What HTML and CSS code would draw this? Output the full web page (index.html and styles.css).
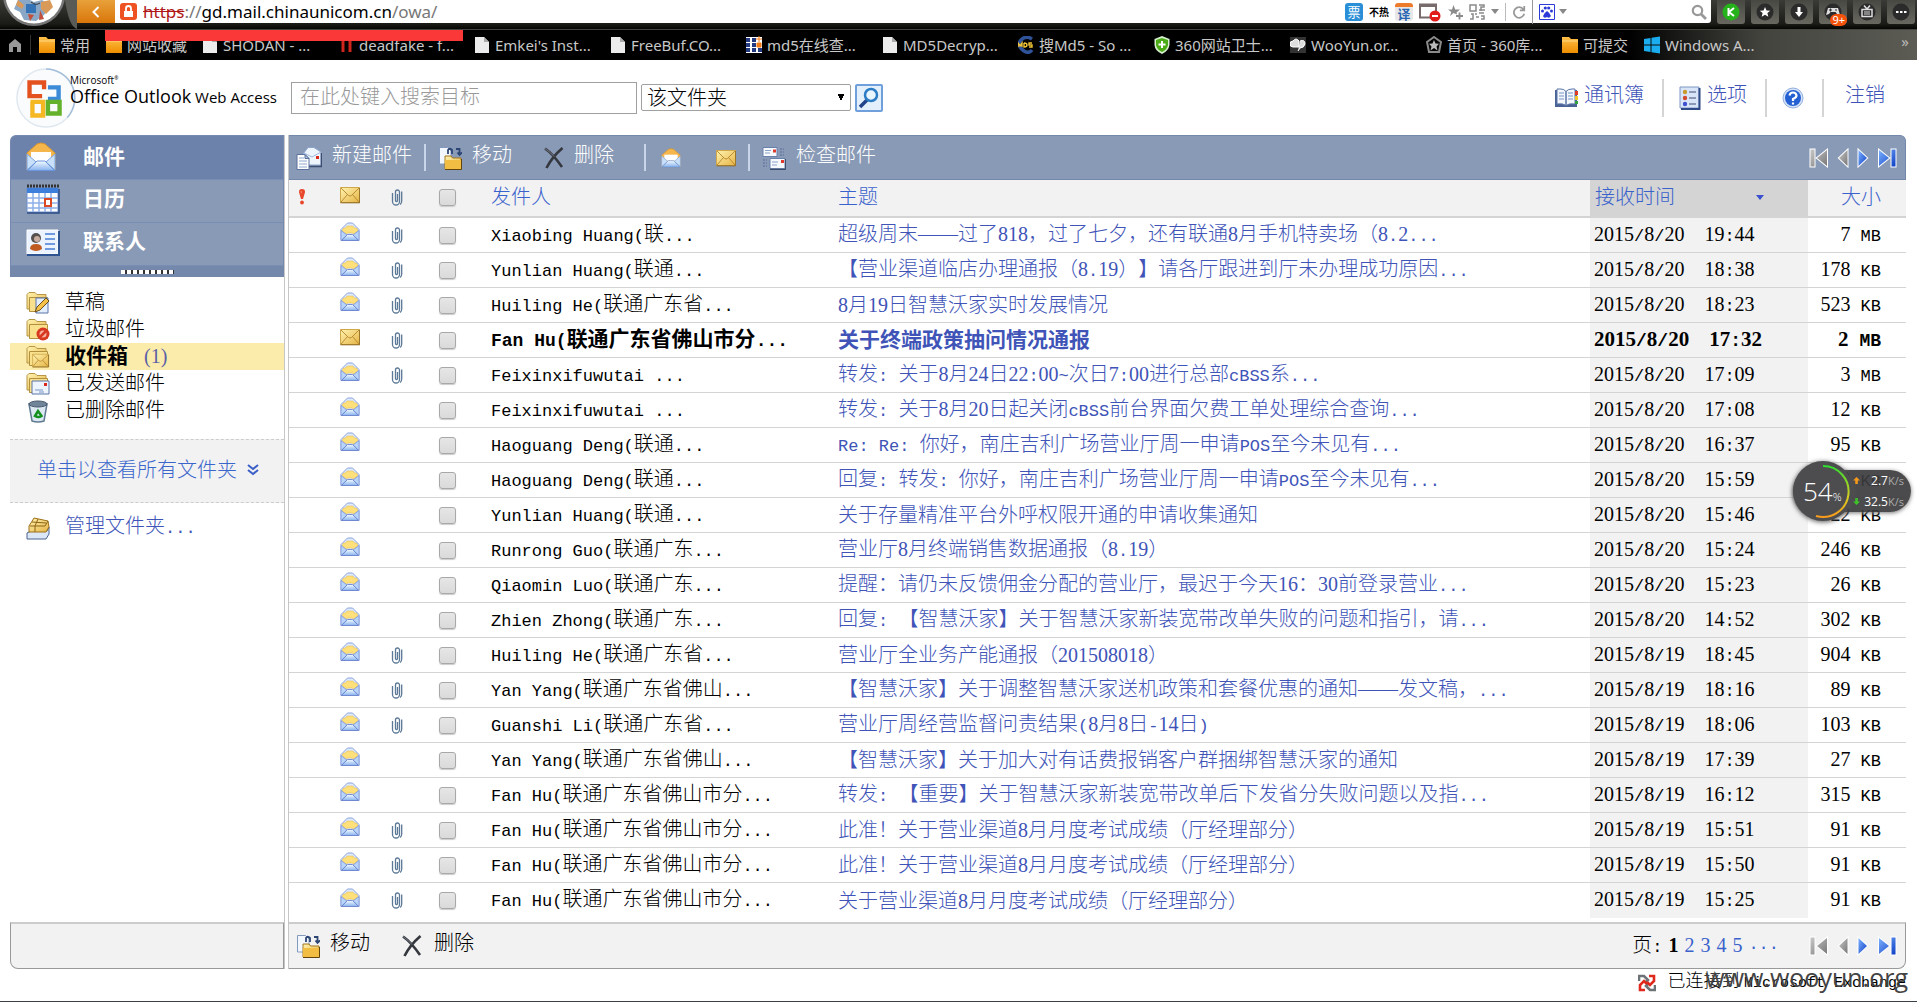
FILE: index.html
```
<!DOCTYPE html>
<html lang="zh-CN">
<head>
    <meta charset="UTF-8">
    <meta name="viewport" content="width=device-width, initial-scale=1.0">
    <title>Outlook Web Access</title>
    <link rel="stylesheet" href="styles.css">
</head>
<body>
    <!-- Shared icons -->
    <svg class="defs" aria-hidden="true">
        <defs>
            <linearGradient id="gold" x1="0" y1="0" x2="1" y2="1"><stop offset="0" stop-color="#fff3b0"/><stop offset="1" stop-color="#e6b445"/></linearGradient>
            <linearGradient id="sky" x1="0" y1="0" x2="0" y2="1"><stop offset="0" stop-color="#f4fbff"/><stop offset="1" stop-color="#86b2ee"/></linearGradient>
            <linearGradient id="orange" x1="0" y1="0" x2="0" y2="1"><stop offset="0" stop-color="#ffc04a"/><stop offset="1" stop-color="#ee8e00"/></linearGradient>
            <linearGradient id="navBlue" x1="0" y1="0" x2="1" y2="1"><stop offset="0" stop-color="#7db2ff"/><stop offset="1" stop-color="#0d3fc4"/></linearGradient>
            <linearGradient id="navGray" x1="0" y1="0" x2="1" y2="1"><stop offset="0" stop-color="#c8c8c8"/><stop offset="1" stop-color="#777"/></linearGradient>
            <symbol id="open" viewBox="0 0 20 20">
                <path d="M1 7.500 5.500 3 7.500 1h5l2 2L19 7.500v11H1z" fill="#dcebfd" stroke="#8ba2dc"/>
                <path d="M3.500 6h2l1.500-2h6l1.500 2h2l1.500 2.500-4 3.500-2-1H8l-2 1-4-3.500z" fill="#ffe07a" stroke="#e3b548" stroke-width=".5"/>
                <path d="M1 8.500 7 13 1 18.500zM19 8.500 13 13l6 5.500z" fill="#b9d4fa" stroke="#7d97d8" stroke-width=".8"/>
                <path d="M1.500 18.500 7.500 12.500h5l6 6z" fill="url(#sky)" stroke="#6d86cf" stroke-width=".9"/>
            </symbol>
            <symbol id="openLarge" viewBox="0 0 30 30">
                <path d="M1 11 11 2q4-2 8 0l10 9v17H1z" fill="#f5b64b" stroke="#d99634"/>
                <path d="M5 10h20v9H5z" fill="#fff"/>
                <path d="M1 12 10 20 1 28zM29 12l-9 8 9 8z" fill="#c9e0fb" stroke="#7ba4e4"/>
                <path d="m1.500 28.500 9.500-9.500h8l9.500 9.500z" fill="url(#sky)" stroke="#6b95dc"/>
            </symbol>
            <symbol id="closed" viewBox="0 0 20 18">
                <path d="M.5 1.500h19v15H.5z" fill="url(#gold)" stroke="#d0a849"/>
                <path d="m1 2 7.500 7.500q1.500 1 3 0L19 2M1 16l6.500-7.500M19 16l-6.500-7.500" fill="none" stroke="#b4832a" stroke-width=".9"/>
                <path d="M.5 16.800h19.200V2" fill="none" stroke="#8e6a24"/>
            </symbol>
            <symbol id="clip" viewBox="0 0 12 17">
                <path d="M1.500 4v8.500a3.300 3.300 0 0 0 7 0V3a2 2 0 0 0-4 0v8.500a.9.900 0 0 0 2 0V5M10.700 2.500v9.500q0 2-1.500 3.500" fill="none" stroke="#5b7896" stroke-width="1.300"/>
            </symbol>
            <symbol id="bang" viewBox="0 0 8 18">
                <path d="M4 1a3 3 0 0 1 3 3.200L5 11H3L1 4.200A3 3 0 0 1 4 1z" fill="#e8472c"/><circle cx="4" cy="14.500" r="1.900" fill="#e8472c"/><path d="M2.500 3.500 3.500 3v3z" fill="#ffb09a"/>
            </symbol>
            <symbol id="newmail" viewBox="0 0 26 24">
                <path d="M7 8 12 1.500h6L25 6v13H10z" fill="#eef4fc" stroke="#8ea6ce"/><path d="m8 7 8 4 9-5" fill="none" stroke="#9db4da"/><path d="M20 10h3v3h-3z" fill="#d8281c"/><path d="M10 20.500h15.500V7" fill="none" stroke="#3c4d70" stroke-width="1.500"/>
                <path d="M1 8.500h8l4 4v11H1z" fill="#fff" stroke="#5b719c"/><path d="M3 12h5M3 15h8M3 18h8M3 21h8" stroke="#8fa6cc"/><path d="M9 8.500v4h4z" fill="#a9c0e6" stroke="#5b719c"/>
            </symbol>
            <symbol id="move" viewBox="0 0 24 24">
                <path d="M1.500 1.500h8L13 5v13H1.500z" fill="#f2f7fd" stroke="#8298bd"/><path d="M10 8V4q1.500-2.500 4 0v4M18 3h3.500v5m-2-1.500L21.500 9 24 6.500" fill="none" stroke="#2c4575" stroke-width="1.800"/>
                <path d="M7 12.500V10h6l1.500 2H23v11H7z" fill="url(#gold)" stroke="#a1741b"/><path d="M7 14h16v9H7z" fill="#f1bd43"/><path d="M7 23.500h16.500V13" fill="none" stroke="#63440d"/>
            </symbol>
            <symbol id="del" viewBox="0 0 20 22">
                <path d="M1 1.500q8 5.500 17 18.500M18.500 1Q8 10 2.500 21" fill="none" stroke="#34373e" stroke-width="2.600"/><path d="M1 1.500q6 4 9 8" fill="none" stroke="#777c87"/>
            </symbol>
            <symbol id="check" viewBox="0 0 24 24">
                <path d="M1 1.500h14v9H1z" fill="#f6f9fd" stroke="#6880ab"/><path d="M3 4.500h6M3 7h5" stroke="#8aa1c8"/><path d="M11 3.500h3v3h-3z" fill="#e0382a"/><path d="M18 3h4M18 6h4M18 9h4M1 14h4M1 17h4M1 20h4" stroke="#566c96" stroke-dasharray="2 1"/>
                <path d="M8 12.500h15v10H8z" fill="#f6f9fd" stroke="#6880ab"/><path d="M10 16h6M10 19h5" stroke="#8aa1c8"/><path d="M19 14h3v3h-3z" fill="#e0382a"/><path d="M8 23.400h15.700V13" fill="none" stroke="#33415e"/>
            </symbol>
            <symbol id="folder" viewBox="0 0 24 24">
                <path d="M1 18V3.500L3 1.500h6l2 2h9V18z" fill="url(#gold)" stroke="#b79645"/><path d="M3.500 20.500V6.500h18v14z" fill="#f8e08d" stroke="#b3903d"/>
            </symbol>
            <symbol id="first" viewBox="0 0 20 20"><path d="M1.500 1.500h4v17h-4zM18 2v16L8 10z"/></symbol>
            <symbol id="prev" viewBox="0 0 12 20"><path d="M10.500 2v16L2 10z"/></symbol>
            <symbol id="next" viewBox="0 0 12 20"><path d="M1.500 2v16l8.500-8z"/></symbol>
            <symbol id="last" viewBox="0 0 20 20"><path d="M14.500 1.500h4v17h-4zM2 2v16l10-8z"/></symbol>
            <symbol id="bmFolder" viewBox="0 0 16 18"><path d="M0 1h7l2 2h7v14H0z" fill="url(#orange)"/><path d="M0 5h16" stroke="#ffd884"/></symbol>
            <symbol id="bmFile" viewBox="0 0 16 18"><path d="M1 1h9l5 5v11H1z" fill="#ececec"/><path d="M10 1v5h5z" fill="#aaa"/></symbol>
        </defs>
    </svg>

    <header class="browser">
        <div class="address-row">
            <svg class="avatar" viewBox="0 0 77 29"><path d="M0 0h77v29q-8-2-12-29z" fill="#5a5a56"/><circle cx="34" cy="-5" r="31" fill="#777"/><circle cx="34" cy="-5" r="28.500" fill="#fff"/><path d="M18 0q8-3 16 2l8-2 8 5-6 10-8 6-12-1-4-8-6-3z" fill="#8ba7c6"/><path d="M26 4h10v9H26z" fill="#3474b6"/><path d="m18 0 6 5-2 4-6-4zm23 2 9-2 3 7-7 7-5-5z" fill="#d99a59"/><path d="m28 14 6 1-4 6zM40 10l4 9-5 1z" fill="#c24f3a"/><path d="M31 2q5 4 9 1" stroke="#333" fill="none"/></svg>
            <button class="back" aria-label="后退"><svg viewBox="0 0 12 16" width="10" height="14"><path d="m9 2-6 6 6 6" fill="none" stroke="#fff" stroke-width="2.400"/></svg></button>
            <div class="address">
                <svg class="lock" viewBox="0 0 17 17"><rect width="17" height="17" rx="3" fill="#ee5222"/><path d="M4 8h9v6H4z" fill="#fff"/><path d="M6 8V5.500a2.500 2.500 0 0 1 5 0V8" fill="none" stroke="#fff" stroke-width="1.800"/></svg>
                <div class="url"><s>https</s>://<b>gd.mail.chinaunicom.cn</b>/owa/</div>
                <span class="tag tag-blue">票</span>
                <span class="tag tag-plain">不热</span>
                <span class="tag tag-orange">译</span>
                <svg viewBox="0 0 22 20" width="22" height="20"><path d="M1 2.500h16v13H1z" fill="#fff" stroke="#776b6b" stroke-width="2"/><path d="M1 3.500h16" stroke="#776b6b" stroke-width="3"/><circle cx="16" cy="14" r="5.500" fill="#e21b1b"/><path d="M13 14h6" stroke="#fff" stroke-width="2"/></svg>
                <svg viewBox="0 0 16 16" width="16" height="16"><path d="m6.500 1 1.700 4.500H13L9.500 8.500l.5 2L6.500 9 3 12l1.300-4L1 5.500h4z" fill="#8b8b8b"/><path d="M9 12h7M12.500 8.500v7" fill="none" stroke="#8b8b8b" stroke-width="1.800"/></svg>
                <svg viewBox="0 0 16 16" width="16" height="16"><path d="M1 1h6v6H1zM10 1h5v2h-3v4M10 6h6M2 10h2v5H1M6 10h2M10 9h5M7 13h3M12 12h3v3h-3" fill="none" stroke="#8b8b8b" stroke-width="1.500"/></svg>
                <span class="caret"></span>
                <span class="split"></span>
                <svg viewBox="0 0 16 16" width="14" height="14"><path d="M13 5a6 6 0 1 0 1 5M14 1v5H9" fill="none" stroke="#999" stroke-width="2"/></svg>
                <div class="engine">
                    <svg viewBox="0 0 16 16" width="16" height="16"><path d="M.5.500h15v15H.5z" fill="#fff" stroke="#2c3bd8"/><path d="M8 7q3 2 4 5-2 3-4 1-3 2-4-1 1-3 4-5z" fill="#2c3bd8"/><circle cx="3.500" cy="7" r="1.500" fill="#2c3bd8"/><circle cx="6.300" cy="4" r="1.600" fill="#2c3bd8"/><circle cx="9.700" cy="4" r="1.600" fill="#2c3bd8"/><circle cx="12.500" cy="7" r="1.500" fill="#2c3bd8"/></svg>
                    <span class="caret"></span>
                </div>
                <svg class="lens" viewBox="0 0 16 16" width="16" height="16"><circle cx="6.500" cy="6.500" r="4.700" fill="none" stroke="#999" stroke-width="2.200"/><path d="m10 10 5 5" stroke="#999" stroke-width="2.800"/></svg>
            </div>
            <div class="extensions">
                <button aria-label="K"><svg viewBox="0 0 18 18"><circle cx="9" cy="9" r="8.500" fill="#25b21a"/><path d="M6.500 5v8M12 5 7 9l5 4" fill="none" stroke="#fff" stroke-width="2"/></svg></button>
                <button aria-label="收藏"><svg viewBox="0 0 18 18"><circle cx="9" cy="9" r="8.500" fill="#2b2b2b"/><path d="m9 4 1.500 3.400 3.700.3-2.800 2.400.9 3.600L9 11.800l-3.300 1.900.9-3.600-2.800-2.400 3.700-.3z" fill="#fff"/></svg></button>
                <button aria-label="下载"><svg viewBox="0 0 18 18"><circle cx="9" cy="9" r="8.500" fill="#2b2b2b"/><path d="M7.500 4h3v5H13l-4 5-4-5h2.500z" fill="#fff"/></svg></button>
                <button aria-label="游戏"><svg viewBox="0 0 18 18"><circle cx="9" cy="9" r="8.500" fill="#2b2b2b"/><path d="M4 5h10l2 7-3-1-1.500-2h-5L5 11l-3 1z" fill="#ddd"/><path d="M5 7h3M6.500 5.500v3M11 7h2" stroke="#333"/></svg><span class="badge">9+</span></button>
                <button aria-label="视频"><svg viewBox="0 0 18 18"><circle cx="9" cy="9" r="8.500" fill="#2b2b2b"/><path d="M4 6.500h10v7H4zM6 2.500l3 3.500 3-3.500" fill="none" stroke="#ddd" stroke-width="1.500"/><path d="M6 9h6M6 11h6" stroke="#ddd"/></svg></button>
                <button aria-label="更多"><svg viewBox="0 0 18 18"><circle cx="9" cy="9" r="8.500" fill="#2b2b2b"/><path d="M4 8h2.500v2H4zM8 8h2.500v2H8zM12 8h2.500v2H12z" fill="#fff"/></svg></button>
            </div>
        </div>
        <nav class="bookmarks">
            <a class="home" href="#" aria-label="主页"><svg viewBox="0 0 14 14"><path d="M1 14V6l6-5 6 5v8H9V9H5v5z" fill="#999"/></svg></a>
            <a class="short" href="#"><svg><use href="#bmFolder"/></svg>常用</a>
            <a class="medium" href="#"><svg><use href="#bmFolder"/></svg>网站收藏</a>
            <a href="#"><svg><use href="#bmFile"/></svg>SHODAN - ...</a>
            <a href="#"><svg viewBox="0 0 16 18"><path d="M5 1v15M12 1v15" stroke="#d0251c" stroke-width="3"/></svg>deadfake - f...</a>
            <a href="#"><svg><use href="#bmFile"/></svg>Emkei's Inst...</a>
            <a href="#"><svg><use href="#bmFile"/></svg>FreeBuf.CO...</a>
            <a href="#"><svg viewBox="0 0 16 18"><path d="M0 1h16v16H0z" fill="#fff"/><path d="M0 2h4v4H0zM6 2h4v4H6zM0 7h4v4H0zM6 7h4v4H6zM0 12h4v4H0zM6 12h4v4H6zM12 12h4v4h-4z" fill="#243a80"/><path d="M11 7h4v4h-4zM13 0v6M10 3h6" fill="#f57c14" stroke="#f57c14"/></svg>md5在线查...</a>
            <a href="#"><svg><use href="#bmFile"/></svg>MD5Decryp...</a>
            <a href="#"><svg viewBox="0 0 16 18"><path d="M14 3Q8-1 3 4T6 15q5 3 8-1" fill="none" stroke="#2f5299" stroke-width="3.500"/><path d="M0 11V7l2 3 2-3v4M6 7v4q3 0 3-2T6 7M14 7h-3v2h3v2h-3" fill="none" stroke="#f2c437" stroke-width="1.400"/></svg>搜Md5 - So ...</a>
            <a href="#"><svg viewBox="0 0 16 18"><path d="m8 0 7.500 3v6q-1 6-7.500 9Q1 15 .5 9V3z" fill="#d8efcf"/><path d="m8 2 6 2v5q-1 5-6 7-5-2-6-7V4z" fill="#4bab16"/><path d="M8 5v7M4.500 8.500h7" stroke="#fff" stroke-width="2"/></svg>360网站卫士...</a>
            <a href="#"><svg viewBox="0 0 16 18"><path d="M0 1h16v16H0z" fill="#333"/><path d="M3 11a3 3 0 0 1 0-6q3-4 6 0v6zM10 5q5-2 5 3-1 4-5 4l-2 3" fill="#ddd" stroke="#fff"/></svg>WooYun.or...</a>
            <a href="#"><svg viewBox="0 0 16 18"><path d="m8 1 7 5-2 10H3L1 6z" fill="none" stroke="#8b8b8b" stroke-width="2"/><path d="m8 4 1.500 3.500 3.500.3-2.500 2.700 1 4L8 12l-3.500 2.500 1-4L3 7.800l3.500-.3z" fill="#bbb"/></svg>首页 - 360库...</a>
            <a class="short2" href="#"><svg><use href="#bmFolder"/></svg>可提交</a>
            <a href="#"><svg viewBox="0 0 16 18"><path d="M0 3 6.500 2v6.500H0zM7.500 1.800 16 .5v8H7.500zM0 9.500h6.500V16L0 15zM7.500 9.500H16v8l-8.500-1.200z" fill="#1aaef0"/></svg>Windows A...</a>
            <span class="more">»</span>
        </nav>
        <div class="redaction"></div>
    </header>

    <header class="owa-header">
        <div class="logo">
            <svg viewBox="0 0 66 66"><circle cx="33" cy="33" r="30" fill="#f9fbfd" stroke="#dfe8f0" stroke-width="1.500"/><path d="M33 3a30 30 0 0 1 22 50" fill="none" stroke="#a5bfda" stroke-width="1.500"/>
                <g fill="none" stroke-width="4.500"><path d="M29 31H16V17h15v7" stroke="#e3511f"/><path d="M35 22h11v12H35" stroke="#3c8bd8"/><path d="M17 37h13v14H19V37" stroke="#f6b822"/><path d="M35 37h12v12H35z" stroke="#64b22b"/></g></svg>
            <div class="logo-text"><small>Microsoft<sup>®</sup></small><div><strong>Office Outlook</strong> <span>Web Access</span></div></div>
        </div>
        <form class="search">
            <input type="text" aria-label="搜索" placeholder="在此处键入搜索目标">
            <select aria-label="搜索范围"><option>该文件夹</option></select>
            <button type="button" aria-label="搜索"><svg viewBox="0 0 22 22" width="22" height="22"><path d="m9 13-7 7" stroke="#23438b" stroke-width="3.500"/><circle cx="13" cy="8" r="6" fill="#e8f6ff" stroke="#2b7cc4" stroke-width="2.500"/></svg></button>
        </form>
        <nav class="account">
            <a href="#"><svg viewBox="0 0 24 22" width="24" height="22"><path d="M1 3h5q4 0 6 2 2-2 6-2h5v17H1z" fill="#4a6294"/><path d="M3 2h4q3 0 5 2.500v14Q9 16 3 17zM12 4.500Q14 2 18 2h3v15q-6-1-9 1.500z" fill="#f4f8fd" stroke="#5a75a8"/><path d="M5 6h5M5 9h5M5 12h5M14 6h5M14 9h5M14 12h5" stroke="#7893c4"/><path d="M21 4h3v4h-3z" fill="#e33b24"/><path d="M21 9h3v4h-3z" fill="#efc52b"/><path d="M21 14h3v3h-3z" fill="#35a33c"/></svg>通讯簿</a>
            <a href="#"><svg viewBox="0 0 22 24" width="22" height="24"><path d="M1 1h19v21H1z" fill="#d8e5f9" stroke="#7f96c2"/><path d="M20.500 2v21H2" fill="none" stroke="#2f4a86" stroke-width="2"/><circle cx="6" cy="6" r="2.200" fill="#c99a2e"/><circle cx="6" cy="12" r="2.200" fill="#d2492f"/><circle cx="6" cy="18" r="2.200" fill="#3d4fd0"/><path d="M10 6h7M10 12h7M10 18h7" stroke="#8a98b5" stroke-width="2"/></svg>选项</a>
            <a href="#" aria-label="帮助"><svg viewBox="0 0 22 22" width="22" height="22"><circle cx="11" cy="11" r="10" fill="#d5e3f8" stroke="#93afe0"/><circle cx="11" cy="11" r="8" fill="#2460d2"/><path d="M7.500 8.500Q8 5.500 11 5.500t3.500 3q0 2-3.500 3.500v2M11 15.500v2" fill="none" stroke="#fff" stroke-width="2.200"/></svg></a>
            <a href="#">注销</a>
        </nav>
    </header>

    <main class="layout">
        <aside class="sidebar">
            <nav class="modules">
                <a class="active" href="#"><svg width="30" height="30"><use href="#openLarge"/></svg>邮件</a>
                <a href="#"><svg viewBox="0 0 34 30" width="34" height="30"><path d="M1 4h31v24H1z" fill="#fff" stroke="#6a8ccd"/><path d="M1 4h31v5H1z" fill="#3e7fdc"/><path d="M1 2h32" stroke="#333" stroke-width="3" stroke-dasharray="2 1"/><path d="M1 14h31M1 19h31M1 24h31M7 9v19M13 9v19M19 9v19M25 9v19" stroke="#8fb0e8" stroke-width="1.500"/><path d="M19 15h6v7h-6z" fill="#fff" stroke="#dc4a25" stroke-width="2"/><path d="M1 29h32V5" fill="none" stroke="#2c4c87" stroke-width="1.500"/></svg>日历</a>
                <a href="#"><svg viewBox="0 0 34 27" width="34" height="27"><path d="M1 1h31v24H1z" fill="#eaf3ff" stroke="#fff"/><path d="M1 26h32V2" fill="none" stroke="#2d5391" stroke-width="2"/><circle cx="10" cy="9" r="5" fill="#56504e"/><circle cx="11" cy="10" r="3" fill="#c9aca0"/><path d="M4 20q0-5 6-5t6 5q-6 4-12 0z" fill="#c05a21"/><path d="M19 5h10M19 10h10M19 15h10M19 20h10" stroke="#6f9ae0" stroke-width="2"/></svg>联系人</a>
            </nav>
            <div class="grip"><span></span></div>
            <ul class="folders">
                <li><a href="#"><svg viewBox="0 0 24 24"><use href="#folder"/><path d="M10 7h12v15H10z" fill="#e2edfb" stroke="#5a75a8"/><path d="m9 21 2-5 9-9 3 3-9 9z" fill="#f4c24b" stroke="#6d4d16"/></svg>草稿</a></li>
                <li><a href="#"><svg viewBox="0 0 24 24"><use href="#folder"/><circle cx="17" cy="16" r="5" fill="#f6b3a0" stroke="#d8381f" stroke-width="3"/><path d="m14 19 6-6" stroke="#d8381f" stroke-width="2.500"/></svg>垃圾邮件</a></li>
                <li class="selected"><a href="#"><svg viewBox="0 0 24 24"><use href="#folder"/><use href="#closed" x="5" y="8" width="19" height="15"/></svg><b>收件箱</b><span class="count">(1)</span></a></li>
                <li><a href="#"><svg viewBox="0 0 24 24"><use href="#folder"/><path d="M6 9h17v13H6z" fill="#eef4fd" stroke="#5a75a8"/><path d="M18 11h3v3h-3z" fill="#d8281c"/><path d="M9 18h8M13 20h5" stroke="#7893c4"/></svg>已发送邮件</a></li>
                <li><a href="#"><svg viewBox="0 0 24 24"><path d="m3 5 3 17q6 2 12 0l3-17z" fill="#dce9f3" stroke="#5e7891" stroke-width="1.500"/><ellipse cx="12" cy="5" rx="9" ry="3" fill="#71859a" stroke="#47596c"/><path d="m9 17 3-5 3.500 5q-3 2-6.500 0z" fill="none" stroke="#14901e" stroke-width="2.500"/></svg>已删除邮件</a></li>
            </ul>
            <a class="all-folders" href="#">单击以查看所有文件夹<svg viewBox="0 0 12 12" width="12" height="12"><path d="m1 1 5 4 5-4M1 6l5 4 5-4" fill="none" stroke="#3a5fc8" stroke-width="2"/></svg></a>
            <a class="manage" href="#"><svg viewBox="0 0 24 24" width="24" height="24"><path d="m1 17 4-2h16l2-4v7l-3 5H1z" fill="#dbe7f7" stroke="#4a628e"/><path d="m3 10 5-8 14 3 1 6-3 5H3z" fill="url(#gold)" stroke="#9d711a"/><path d="M4 10h15l3-5M6 6l14 1M12 3l-3 7v6" fill="none" stroke="#8d6417"/></svg><span>管理文件夹<i class="en">...</i></span></a>
            <div class="side-foot"></div>
        </aside>

        <section class="mailbox">
            <div class="toolbar">
                <button><svg width="26" height="24"><use href="#newmail"/></svg>新建邮件</button>
                <span class="bar"></span>
                <button><svg width="24" height="24"><use href="#move"/></svg>移动</button>
                <button class="delete"><svg width="20" height="22"><use href="#del"/></svg>删除</button>
                <span class="bar"></span>
                <button class="mark" aria-label="标记为已读"><svg width="20" height="20"><use href="#openLarge"/></svg></button>
                <button class="mark last-mark" aria-label="标记为未读"><svg width="20" height="18"><use href="#closed"/></svg></button>
                <span class="bar"></span>
                <button><svg width="24" height="24"><use href="#check"/></svg>检查邮件</button>
                <div class="pager-icons">
                    <button class="off" aria-label="第一页"><svg width="20" height="20"><use href="#first"/></svg></button>
                    <button class="off" aria-label="上一页"><svg width="12" height="20"><use href="#prev"/></svg></button>
                    <button aria-label="下一页"><svg width="12" height="20"><use href="#next"/></svg></button>
                    <button aria-label="最后一页"><svg width="20" height="20"><use href="#last"/></svg></button>
                </div>
            </div>

            <table class="messages">
                <colgroup><col class="c-flag"><col class="c-icon"><col class="c-clip"><col class="c-check"><col class="c-from"><col><col class="c-date"><col class="c-size"></colgroup>
                <thead>
                    <tr>
                        <th><svg width="8" height="18"><use href="#bang"/></svg></th>
                        <th><svg width="20" height="18"><use href="#closed"/></svg></th>
                        <th><svg width="12" height="17"><use href="#clip"/></svg></th>
                        <th><input type="checkbox" aria-label="全选"></th>
                        <th><a href="#">发件人</a></th>
                        <th><a href="#">主题</a></th>
                        <th class="sorted"><a href="#">接收时间<span class="sort-arrow"></span></a></th>
                        <th class="size"><a href="#">大小</a></th>
                    </tr>
                </thead>
                <tbody id="messageRows"></tbody>
            </table>

            <div class="foot">
                <button><svg width="24" height="24"><use href="#move"/></svg>移动</button>
                <button class="delete"><svg width="20" height="22"><use href="#del"/></svg>删除</button>
                <div class="pages"><span>页<i class="en">:</i></span><b>1</b><a href="#">2</a><a href="#">3</a><a href="#">4</a><a href="#">5</a><a href="#" class="en">...</a></div>
                <div class="pager-icons">
                    <button class="off" aria-label="第一页"><svg width="20" height="20"><use href="#first"/></svg></button>
                    <button class="off" aria-label="上一页"><svg width="12" height="20"><use href="#prev"/></svg></button>
                    <button aria-label="下一页"><svg width="12" height="20"><use href="#next"/></svg></button>
                    <button aria-label="最后一页"><svg width="20" height="20"><use href="#last"/></svg></button>
                </div>
            </div>
        </section>
    </main>

    <footer class="status">
        <svg viewBox="0 0 18 18" width="18" height="18"><path d="M1 7V2h5l4 4-3 3M17 11v5h-5l-4-4 3-3" fill="none" stroke="#6d7377" stroke-width="2.600"/><path d="M11 2h5v5l-4 4-3-3M7 16H2v-5l4-4 3 3" fill="none" stroke="#e0281c" stroke-width="2.600"/></svg>
        <span>已连接到 <i>Microsoft Exchange</i></span>
        <div class="watermark">www.wooyun.org</div>
    </footer>

    <!-- Floating memory / network monitor -->
    <div class="monitor">
        <div class="speeds">
            <div><svg viewBox="0 0 8 8" width="7" height="7"><path d="m4 0 4 4H5.500v4h-3V4H0z" fill="#f79a1c"/></svg>2.7<small>K/s</small></div>
            <div><svg viewBox="0 0 8 8" width="7" height="7"><path d="m4 8 4-4H5.500V0h-3v4H0z" fill="#3fc42a"/></svg>32.5<small>K/s</small></div>
        </div>
        <div class="dial">
            <svg viewBox="0 0 60 60"><defs><linearGradient id="ring" x1="0" y1="0" x2="0" y2="1"><stop offset="0" stop-color="#2fdc2f"/><stop offset=".6" stop-color="#d6cf22"/><stop offset="1" stop-color="#f79a1c"/></linearGradient></defs><path d="M30 5a25.500 25.500 0 1 1-7 50" fill="none" stroke="url(#ring)" stroke-width="2"/></svg>
            <span>54<small>%</small></span>
        </div>
    </div>

    <script src="script.js"></script>
</body>
</html>
```
FILE: styles.css
```
* {
    box-sizing: border-box;
}
body {
    margin: 0;
    min-height: 100vh;
    display: flex;
    flex-direction: column;
    background: #fff;
    color: #000;
    font-family: "Liberation Serif", "Noto Sans CJK SC", serif;
    font-weight: 300;
    font-size: 20px;
    line-height: 24px;
    text-spacing-trim: space-all;
    border-bottom: 1px solid #3a4048;
}
a {
    color: #4054b8;
    text-decoration: none;
}
b {
    font-weight: 700;
}
button {
    display: flex;
    align-items: center;
    padding: 0;
    border: 0;
    background: none;
    font: inherit;
    color: inherit;
    cursor: pointer;
}
svg {
    flex: none;
}
.defs {
    position: absolute;
    width: 0;
    height: 0;
}
/* half-width text, one cell is 10px */
.en {
    font-family: "Liberation Mono", monospace;
    font-size: 17px;
    font-style: normal;
}

/* browser bars */
.browser {
    position: relative;
    background: linear-gradient(#3a3b37, #1a1b16 24px, #000 30px);
    font-family: "Noto Sans", "Noto Sans CJK SC", sans-serif;
    font-weight: 400;
}
.address-row {
    display: flex;
    height: 30px;
    padding-bottom: 6px;
    border-bottom: 1px solid #44453f;
}
.avatar {
    width: 77px;
    height: 29px;
}
.back {
    width: 38px;
    justify-content: center;
    background: linear-gradient(#e8a13a, #d9760a);
}
.address {
    flex: 1;
    display: flex;
    align-items: center;
    gap: 6px;
    padding: 0 4px 0 5px;
    background: #fff;
    border-radius: 0 0 3px 0;
}
.lock {
    width: 17px;
    height: 17px;
}
.url {
    flex: 1;
    font-size: 17px;
    color: #777;
}
.url b {
    font-weight: 400;
    color: #000;
}
.url s {
    color: #b01818;
}
.tag {
    width: 18px;
    height: 18px;
    border-radius: 3px;
    font-size: 13px;
    line-height: 18px;
    text-align: center;
    white-space: nowrap;
}
.tag-blue {
    background: #2b8fd8;
    color: #fff;
}
.tag-plain {
    width: 20px;
    font-size: 10px;
    font-weight: 700;
}
.tag-orange {
    background: #e8e8e8;
    border-top: 4px solid #ee7a2c;
    line-height: 14px;
    color: #2a66b4;
    font-weight: 700;
}
.caret {
    border: 4px solid transparent;
    border-top: 5px solid #888;
    border-bottom: 0;
}
.split {
    width: 1px;
    height: 18px;
    background: #bbb;
}
.engine {
    display: flex;
    align-items: center;
    gap: 4px;
    height: 24px;
    padding-left: 6px;
    border-left: 1px solid #999;
}
.lens {
    margin-left: 118px;
}
.extensions {
    display: flex;
    gap: 6px;
    padding: 0 2px 0 6px;
}
.extensions button {
    position: relative;
    width: 28px;
    height: 24px;
    justify-content: center;
    background: linear-gradient(#484843, #686860);
    border-radius: 0 0 3px 3px;
}
.extensions svg {
    width: 18px;
    height: 18px;
}
.badge {
    position: absolute;
    right: 0;
    bottom: -2px;
    padding: 0 2px;
    border-radius: 6px;
    background: #f4510b;
    color: #fff;
    font-size: 11px;
    line-height: 12px;
}
.bookmarks {
    display: flex;
    align-items: center;
    height: 30px;
    background: linear-gradient(90deg, transparent 85%, #44443f 92%, #5c5c55);
    font-size: 15px;
}
.bookmarks a {
    display: flex;
    align-items: center;
    gap: 5px;
    width: 136px;
    color: #c8c8c8;
    white-space: nowrap;
}
.bookmarks svg {
    width: 16px;
    height: 18px;
}
.bookmarks .home {
    width: 31px;
    height: 20px;
    margin-right: 8px;
    padding-left: 8px;
    border-right: 1px solid #333;
}
.bookmarks .home svg {
    width: 14px;
    height: 14px;
}
.bookmarks .short {
    width: 67px;
}
.bookmarks .medium {
    width: 96px;
}
.bookmarks .short2 {
    width: 82px;
}
.more {
    margin: 0 8px 8px auto;
    color: #bbb;
}
.redaction {
    position: absolute;
    left: 105px;
    top: 30px;
    width: 358px;
    height: 11px;
    background: #fb3838;
}

/* page header */
.owa-header {
    display: flex;
    align-items: center;
    height: 75px;
    padding: 0 32px 0 14px;
}
.logo {
    display: flex;
    width: 277px;
    font-family: "Open Sans", sans-serif;
    font-weight: 400;
    white-space: nowrap;
}
.logo > svg {
    width: 64px;
    height: 66px;
    margin-right: -8px;
}
.logo-text {
    padding-top: 9px;
    line-height: 20px;
    font-size: 15px;
}
.logo-text small {
    display: block;
    font-size: 10px;
    line-height: 12px;
}
.logo-text sup {
    font-size: 5px;
    line-height: 5px;
}
.logo-text strong {
    font-size: 18px;
    font-weight: 400;
}
.search {
    display: flex;
    align-items: center;
    gap: 4px;
}
.search input {
    width: 346px;
    height: 32px;
    padding: 0 8px;
    border: 1px solid #a0a0a0;
    font: inherit;
}
.search input::placeholder {
    color: #999;
}
.search select {
    appearance: none;
    width: 210px;
    height: 27px;
    padding: 0 5px;
    border: 1px solid #a0a0a0;
    border-radius: 2px;
    background: #fff conic-gradient(from -25deg at 50% 100%, #000 50deg, transparent 0) no-repeat right 6px center / 6px 7px;
    font: inherit;
}
.search button {
    width: 28px;
    height: 28px;
    justify-content: center;
    border: 2px solid #6fa0dc;
    border-radius: 2px;
    background: #e3effb;
}
.account {
    display: flex;
    align-items: center;
    margin-left: auto;
}
.account a {
    display: flex;
    align-items: center;
    gap: 6px;
    height: 38px;
    padding: 0 18px 6px 15px;
    border-left: 2px solid #d4d4d4;
}
.account a:first-child {
    border-left: 0;
}
.account svg {
    margin-top: 7px;
}
.account a:last-child {
    padding: 0 0 6px 21px;
}

/* main columns */
.layout {
    display: grid;
    grid-template-columns: 275px 1fr;
    gap: 3px;
    padding: 0 11px 0 10px;
}
.sidebar {
    display: flex;
    flex-direction: column;
    border-right: 1px solid #c6c6c6;
}
.modules {
    background: #899ab6;
    border: 1px solid #7488b0;
    border-bottom: 0;
    border-radius: 6px 0 0 0;
    overflow: hidden;
}
.modules a {
    display: grid;
    grid-template-columns: 57px 1fr;
    align-items: center;
    height: 43px;
    padding: 0 15px 4px;
    border-bottom: 1px solid #7a8db4;
    color: #fff;
    font-size: 21px;
    font-weight: 700;
}
.modules .active {
    height: 44px;
    padding-bottom: 1px;
    background: #6d82aa;
}
.grip {
    display: flex;
    justify-content: center;
    align-items: center;
    height: 11px;
    background: #7488ac;
}
.grip span {
    width: 53px;
    height: 4px;
    background: repeating-linear-gradient(90deg, #fff 0 4px, #333 4px 6px);
}
.folders {
    list-style: none;
    margin: 0;
    padding: 12px 0 15px;
}
.folders a {
    display: flex;
    align-items: center;
    height: 27px;
    padding: 0 16px 2px;
    color: #000;
}
.folders svg {
    width: 24px;
    height: 24px;
    margin: 3px 15px 0 0;
}
.folders .selected {
    background: #fbecab;
}
.folders b {
    font-size: 21px;
}
.folders .count {
    margin-left: 16px;
    color: #5a5fa8;
}
.all-folders {
    display: flex;
    align-items: center;
    gap: 10px;
    height: 64px;
    padding: 0 0 2px 27px;
    background: #f2f2f2;
    border: 1px dashed #ccc;
    border-width: 1px 0;
    color: #3a66cc;
}
.manage {
    display: flex;
    align-items: center;
    gap: 15px;
    padding: 11px 16px;
}
.side-foot {
    height: 47px;
    margin-top: auto;
    background: #f2f2f2;
    border: 1px solid #999;
    border-top: 2px solid #ccc;
    border-radius: 0 0 0 8px;
}

.mailbox {
    border-left: 1px solid #c6c6c6;
}
.toolbar {
    display: flex;
    align-items: center;
    height: 45px;
    padding: 0 8px 0 7px;
    background: #899ab6;
    border: 1px solid #7488ac;
    border-left: 0;
    border-radius: 0 6px 0 0;
    color: #fff;
}
.toolbar button, .foot button {
    gap: 10px;
    padding-bottom: 6px;
}
.toolbar svg, .foot svg {
    margin-top: 6px;
}
.toolbar .bar {
    width: 2px;
    height: 27px;
    margin: 0 12px;
    background: #c9d5e8;
}
.toolbar .delete, .foot .delete {
    margin-left: 32px;
}
.toolbar .delete {
    margin-right: 18px;
}
.toolbar .mark {
    margin-left: 3px;
    margin-right: 32px;
}
.toolbar .last-mark {
    margin-right: 0;
}
.pager-icons {
    display: flex;
    align-items: center;
    gap: 8px;
    margin-left: auto;
}
.pager-icons svg {
    fill: url(#navBlue);
    stroke: #fff;
    stroke-width: 2px;
    paint-order: stroke;
}
.pager-icons .off svg {
    fill: url(#navGray);
}

/* message list */
.messages {
    width: 100%;
    table-layout: fixed;
    border-collapse: separate;
    border-spacing: 0;
}
.c-flag { width: 34px; }
.c-icon { width: 53px; }
.c-clip { width: 42px; }
.c-check { width: 58px; }
.c-from { width: 359px; }
.c-date { width: 218px; }
.c-size { width: 98px; }
.messages th {
    height: 38px;
    padding: 0 3px 2px;
    background: #f2f2f2;
    border-bottom: 2px solid #d4d4d4;
    font-weight: 300;
    text-align: left;
}
.messages th a {
    color: #3a62cc;
}
.messages td {
    height: 35px;
    padding: 0 3px;
    border-bottom: 1px solid #d4d4d4;
    white-space: nowrap;
}
.messages th:nth-child(5), .messages td:nth-child(5) {
    padding-left: 15px;
}
.messages tbody tr:last-child td {
    border-bottom: 0;
}
.messages svg {
    display: block;
    margin: 0 auto;
}
.messages th:first-child svg {
    margin-left: 6px;
}
.messages th:nth-child(2) svg {
    margin-bottom: 4px;
}
.messages td:nth-child(2) svg {
    margin-bottom: 6px;
}
.messages input {
    appearance: none;
    display: block;
    width: 17px;
    height: 17px;
    margin: 0 auto;
    border: 1px solid #a8a8a8;
    border-radius: 3px;
    background: linear-gradient(#e6e6e6, #dadada);
    box-shadow: 0 1px 1px #ccc;
}
.messages td:nth-child(7) {
    padding-left: 4px;
    background: #f2f2f2;
}
.messages .sorted {
    padding-left: 5px;
    background: #d4d4d4;
}
.sorted a {
    display: flex;
    align-items: center;
    justify-content: space-between;
}
.sort-arrow {
    margin-right: 41px;
    border: 4px solid transparent;
    border-top: 5px solid #3a50d0;
    border-bottom: 0;
}
.messages .size, .messages td:last-child {
    padding-right: 25px;
    text-align: right;
}
.unread td {
    font-size: 21px;
    font-weight: 700;
}
.unread .en {
    font-size: 18px;
}
.time {
    margin-left: 20px;
}

.foot {
    display: flex;
    align-items: center;
    height: 47px;
    margin-top: 4px;
    padding: 0 8px 0 7px;
    background: #f2f2f2;
    border: 1px solid #999;
    border-left: 0;
    border-top: 2px solid #ccc;
    border-radius: 0 0 8px 0;
}
.foot .delete {
    gap: 12px;
}
.pages {
    display: flex;
    gap: 6px;
    margin-left: auto;
}
.pages a {
    color: #3a62cc;
}
.foot .pager-icons {
    margin-left: 30px;
}

.status {
    position: relative;
    display: flex;
    justify-content: flex-end;
    align-items: center;
    gap: 11px;
    padding: 0 11px;
    font-size: 18px;
}
.status i {
    font-family: "Liberation Mono", monospace;
    font-size: 15px;
    font-style: normal;
}
.watermark {
    position: absolute;
    right: 9px;
    top: -7px;
    font-family: "Open Sans", sans-serif;
    font-size: 25px;
    font-weight: 400;
    line-height: 30px;
    color: #444;
}

/* floating monitor */
.monitor {
    position: absolute;
    right: 6px;
    top: 461px;
    display: flex;
    align-items: center;
    font-family: "Open Sans", sans-serif;
    color: #fff;
}
.dial {
    position: absolute;
    left: 0;
    width: 60px;
    height: 60px;
    border-radius: 50%;
    background: #4d4d4f;
    box-shadow: 0 1px 5px #555;
}
.dial svg {
    display: block;
}
.dial span {
    position: absolute;
    left: 10px;
    top: 15px;
    font-size: 26px;
    line-height: 30px;
}
.dial small {
    font-size: 11px;
}
.speeds {
    width: 118px;
    margin: 9px 0;
    padding: 0 7px 0 60px;
    border-radius: 21px;
    background: rgba(60, 60, 62, 0.92);
    box-shadow: 0 1px 4px #777;
    font-size: 12px;
    font-weight: 400;
    line-height: 21px;
}
.speeds div {
    display: flex;
    align-items: center;
    white-space: nowrap;
}
.speeds svg {
    margin-right: auto;
}
.speeds small {
    font-size: 11px;
    color: #aaa;
}
```
FILE: script.js
```
// [sender, subject, date, time, size, has attachment, unread]
const messages = [
    ['Xiaobing Huang(联...', '超级周末——过了818，过了七夕，还有联通8月手机特卖场（8.2...', '2015/8/20', '19:44', '7 MB', 1],
    ['Yunlian Huang(联通...', '【营业渠道临店办理通报（8.19）】请各厅跟进到厅未办理成功原因...', '2015/8/20', '18:38', '178 KB', 1],
    ['Huiling He(联通广东省...', '8月19日智慧沃家实时发展情况', '2015/8/20', '18:23', '523 KB', 1],
    ['Fan Hu(联通广东省佛山市分...', '关于终端政策抽问情况通报', '2015/8/20', '17:32', '2 MB', 1, 1],
    ['Feixinxifuwutai ...', '转发: 关于8月24日22:00~次日7:00进行总部cBSS系...', '2015/8/20', '17:09', '3 MB', 1],
    ['Feixinxifuwutai ...', '转发: 关于8月20日起关闭cBSS前台界面欠费工单处理综合查询...', '2015/8/20', '17:08', '12 KB', 0],
    ['Haoguang Deng(联通...', 'Re: Re: 你好，南庄吉利广场营业厅周一申请POS至今未见有...', '2015/8/20', '16:37', '95 KB', 0],
    ['Haoguang Deng(联通...', '回复: 转发: 你好，南庄吉利广场营业厅周一申请POS至今未见有...', '2015/8/20', '15:59', '92 KB', 0],
    ['Yunlian Huang(联通...', '关于存量精准平台外呼权限开通的申请收集通知', '2015/8/20', '15:46', '22 KB', 0],
    ['Runrong Guo(联通广东...', '营业厅8月终端销售数据通报（8.19）', '2015/8/20', '15:24', '246 KB', 0],
    ['Qiaomin Luo(联通广东...', '提醒：请仍未反馈佣金分配的营业厅，最迟于今天16：30前登录营业...', '2015/8/20', '15:23', '26 KB', 0],
    ['Zhien Zhong(联通广东...', '回复: 【智慧沃家】关于智慧沃家新装宽带改单失败的问题和指引，请...', '2015/8/20', '14:52', '302 KB', 0],
    ['Huiling He(联通广东省...', '营业厅全业务产能通报（201508018）', '2015/8/19', '18:45', '904 KB', 1],
    ['Yan Yang(联通广东省佛山...', '【智慧沃家】关于调整智慧沃家送机政策和套餐优惠的通知——发文稿，...', '2015/8/19', '18:16', '89 KB', 1],
    ['Guanshi Li(联通广东省...', '营业厅周经营监督问责结果(8月8日-14日)', '2015/8/19', '18:06', '103 KB', 1],
    ['Yan Yang(联通广东省佛山...', '【智慧沃家】关于加大对有话费报销客户群捆绑智慧沃家的通知', '2015/8/19', '17:39', '27 KB', 0],
    ['Fan Hu(联通广东省佛山市分...', '转发: 【重要】关于智慧沃家新装宽带改单后下发省分失败问题以及指...', '2015/8/19', '16:12', '315 KB', 0],
    ['Fan Hu(联通广东省佛山市分...', '此准！关于营业渠道8月月度考试成绩（厅经理部分）', '2015/8/19', '15:51', '91 KB', 1],
    ['Fan Hu(联通广东省佛山市分...', '此准！关于营业渠道8月月度考试成绩（厅经理部分）', '2015/8/19', '15:50', '91 KB', 1],
    ['Fan Hu(联通广东省佛山市分...', '关于营业渠道8月月度考试成绩（厅经理部分）', '2015/8/19', '15:25', '91 KB', 1]
];

// Wrap half-width runs so they get the monospace face, digits are half-width already
function mixed(text) {
    return text.replace(/[\x20-\x2f\x3a-\x7e]+/g, '<span class="en">$&</span>');
}

document.getElementById('messageRows').innerHTML = messages.map(m => {
    const [from, subject, date, time, size, clip, unread] = m;
    return `<tr${unread ? ' class="unread"' : ''}>
        <td></td>
        <td><svg width="20" height="${unread ? 18 : 20}"><use href="#${unread ? 'closed' : 'open'}"/></svg></td>
        <td>${clip ? '<svg width="12" height="17"><use href="#clip"/></svg>' : ''}</td>
        <td><input type="checkbox" aria-label="${subject}"></td>
        <td>${mixed(from)}</td>
        <td><a href="#">${mixed(subject)}</a></td>
        <td>${mixed(date)}<span class="time">${mixed(time)}</span></td>
        <td>${mixed(size)}</td>
    </tr>`;
}).join('');
```
